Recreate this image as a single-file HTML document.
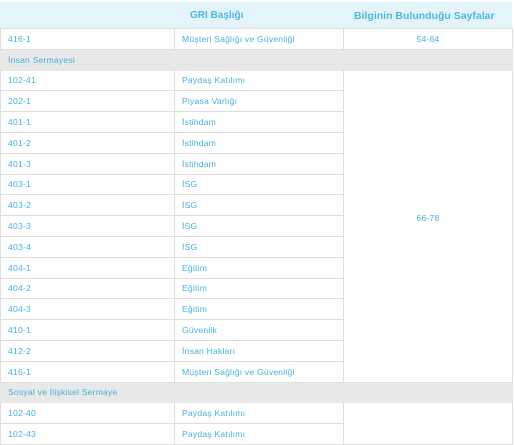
<!DOCTYPE html>
<html><head><meta charset="utf-8"><style>
*{margin:0;padding:0;box-sizing:border-box}
body{width:515px;height:443px;background:#fff;font-family:"Liberation Sans",sans-serif;color:#45b3dc;overflow:hidden;position:relative}
.hd{position:absolute;left:0;top:2px;width:512px;height:27px;background:#e4f4fb;font-weight:bold;font-size:10.5px;color:#4fb8df}
.hd span{position:absolute;top:8px}
table{position:absolute;left:0;top:28px;width:512px;border-collapse:collapse;font-size:8.6px;letter-spacing:0.2px;table-layout:fixed}
td{height:20.8px;border:1px solid #dedede;padding:0 0 0 7px;vertical-align:middle;white-space:nowrap}
tr.g td{background:#e8e8e8;border-color:#e8e8e8}
td.c{text-align:center;padding:0}
td.m{padding-bottom:16px}
</style></head><body>
<div class="hd"><span style="left:190px;font-size:10px">GRI Başlığı</span><span style="left:354px">Bilginin Bulunduğu Sayfalar</span></div>
<table>
<colgroup><col style="width:174px"><col style="width:169px"><col style="width:169px"></colgroup>
<tr><td>416-1</td><td>Müşteri Sağlığı ve Güvenliği</td><td class="c">54-64</td></tr>
<tr class="g"><td colspan="3">İnsan Sermayesi</td></tr>
<tr><td>102-41</td><td>Paydaş Katılımı</td><td class="c m" rowspan="15">66-78</td></tr>
<tr><td>202-1</td><td>Piyasa Varlığı</td></tr>
<tr><td>401-1</td><td>İstihdam</td></tr>
<tr><td>401-2</td><td>İstihdam</td></tr>
<tr><td>401-3</td><td>İstihdam</td></tr>
<tr><td>403-1</td><td>İSG</td></tr>
<tr><td>403-2</td><td>İSG</td></tr>
<tr><td>403-3</td><td>İSG</td></tr>
<tr><td>403-4</td><td>İSG</td></tr>
<tr><td>404-1</td><td>Eğitim</td></tr>
<tr><td>404-2</td><td>Eğitim</td></tr>
<tr><td>404-3</td><td>Eğitim</td></tr>
<tr><td>410-1</td><td>Güvenlik</td></tr>
<tr><td>412-2</td><td>İnsan Hakları</td></tr>
<tr><td>416-1</td><td>Müşteri Sağlığı ve Güvenliği</td></tr>
<tr class="g"><td colspan="3">Sosyal ve İlişkisel Sermaye</td></tr>
<tr><td>102-40</td><td>Paydaş Katılımı</td><td rowspan="2"></td></tr>
<tr><td>102-43</td><td>Paydaş Katılımı</td></tr>
</table>
</body></html>
